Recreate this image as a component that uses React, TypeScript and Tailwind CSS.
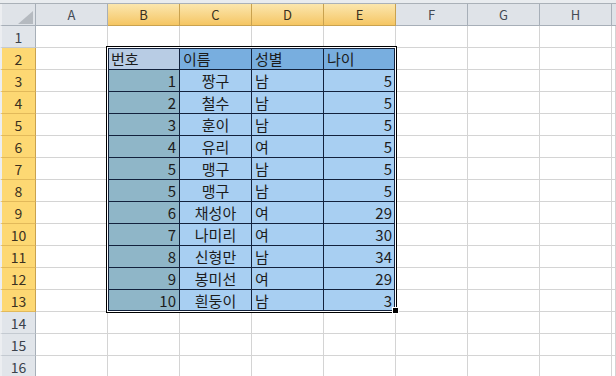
import React from 'react';

const cols = ['A', 'B', 'C', 'D', 'E', 'F', 'G', 'H'];

// 표 데이터 (B2:E13)
const header = ['번호', '이름', '성별', '나이'];
const rows: [string, string, string, string][] = [
  ['1', '짱구', '남', '5'],
  ['2', '철수', '남', '5'],
  ['3', '훈이', '남', '5'],
  ['4', '유리', '여', '5'],
  ['5', '맹구', '남', '5'],
  ['5', '맹구', '남', '5'],
  ['6', '채성아', '여', '29'],
  ['7', '나미리', '여', '30'],
  ['8', '신형만', '남', '34'],
  ['9', '봉미선', '여', '29'],
  ['10', '흰둥이', '남', '3'],
];

const font = { fontFamily: '"Noto Sans CJK KR", "Noto Sans", sans-serif' };

const ColHeader: React.FC<{ label: string; selected: boolean }> = ({ label, selected }) => (
  <div
    className={
      'h-[22px] flex items-center justify-center text-[13px] leading-none border-r border-b ' +
      (selected
        ? 'bg-gradient-to-b from-[#fbe6ad] to-[#f5c662] border-[#c9a24f] text-[#3a3020]'
        : 'bg-[#dfe3e8] border-[#a7afb8] text-[#444b55]')
    }
  >
    {label}
  </div>
);

const RowHeader: React.FC<{ n: number; selected: boolean }> = ({ n, selected }) => (
  <div
    className={
      'h-[22px] flex items-center justify-center text-[14px] leading-none border-l-2 border-l-[#eceef1] border-r border-b ' +
      (selected
        ? 'bg-[#fdd873] border-r-[#c9a24f] border-b-[#e2b95a] text-[#3a3020]'
        : 'bg-[#e1e5ea] border-r-[#a7afb8] border-b-[#c4cad1] text-[#3b424b]')
    }
  >
    {n}
  </div>
);

const Cell: React.FC<{ r: number; c: number }> = ({ r, c }) => {
  // c: 0 = A ... 7 = H, 8 = I(partial)
  const inTable = r >= 2 && r <= 13 && c >= 1 && c <= 4;
  if (inTable) {
    const isHead = r === 2;
    let bg = 'bg-[#a8cff2]';
    if (c === 1) bg = isHead ? 'bg-[#b8cce4]' : 'bg-[#8fb6c8]';
    else if (isHead) bg = 'bg-[#78aedf]';
    let text = '';
    let align = 'justify-start pl-[3px]';
    if (isHead) {
      text = header[c - 1];
    } else {
      const d = rows[r - 3];
      text = d[c - 1];
      if (c === 1 || c === 4) align = 'justify-end pr-[3px]';
      if (c === 2) align = 'justify-center';
    }
    return (
      <div
        className={`h-[22px] flex items-center ${align} ${bg} border-r border-b border-[#13223d] text-[15px] leading-none text-[#1c1c1c]`}
      >
        {text}
      </div>
    );
  }
  const darkRight = c === 0 && r >= 2 && r <= 13;
  const darkBottom = r === 1 && c >= 1 && c <= 4;
  return (
    <div
      className={
        'h-[22px] bg-white border-r border-b ' +
        (darkRight ? 'border-r-[#13223d] ' : 'border-r-[#d4d4d4] ') +
        (darkBottom ? 'border-b-[#13223d]' : 'border-b-[#d4d4d4]')
      }
    />
  );
};

export default function App() {
  const rowNums = Array.from({ length: 16 }, (_, i) => i + 1);
  return (
    <div className="relative w-[616px] h-[376px] overflow-hidden bg-white" style={font}>
      <div className="h-[3px] bg-[#e9ecef] border-b border-[#aab1b8] box-content" />
      <div className="grid grid-cols-[36px_repeat(8,72px)_4px]">
        {/* 모서리 */}
        <div className="h-[22px] bg-[#dfe3e8] border-l-2 border-l-[#eceef1] border-r border-b border-[#a7afb8] relative">
          <svg className="absolute left-[16px] top-[7px]" width="15" height="13" viewBox="0 0 15 13">
            <polygon points="15,0 15,13 0,13" fill="#b5bac0" />
          </svg>
        </div>
        {cols.map((l, i) => (
          <ColHeader key={l} label={l} selected={i >= 1 && i <= 4} />
        ))}
        <div className="h-[22px] bg-[#dfe3e8] border-b border-[#a7afb8]" />

        {rowNums.map((r) => (
          <React.Fragment key={r}>
            <RowHeader n={r} selected={r >= 2 && r <= 13} />
            {Array.from({ length: 9 }, (_, c) => (
              <Cell key={c} r={r} c={c} />
            ))}
          </React.Fragment>
        ))}
      </div>

      {/* 선택 영역 테두리 */}
      <div className="absolute left-[106px] top-[46px] w-[291px] h-[267px] border border-black pointer-events-none">
        <div className="w-full h-full border border-white">
          <div className="w-full h-full border border-[#13223d]" />
        </div>
      </div>
      <div className="absolute left-[392px] top-[307px] w-[7px] h-[7px] bg-black border border-white" />
    </div>
  );
}
